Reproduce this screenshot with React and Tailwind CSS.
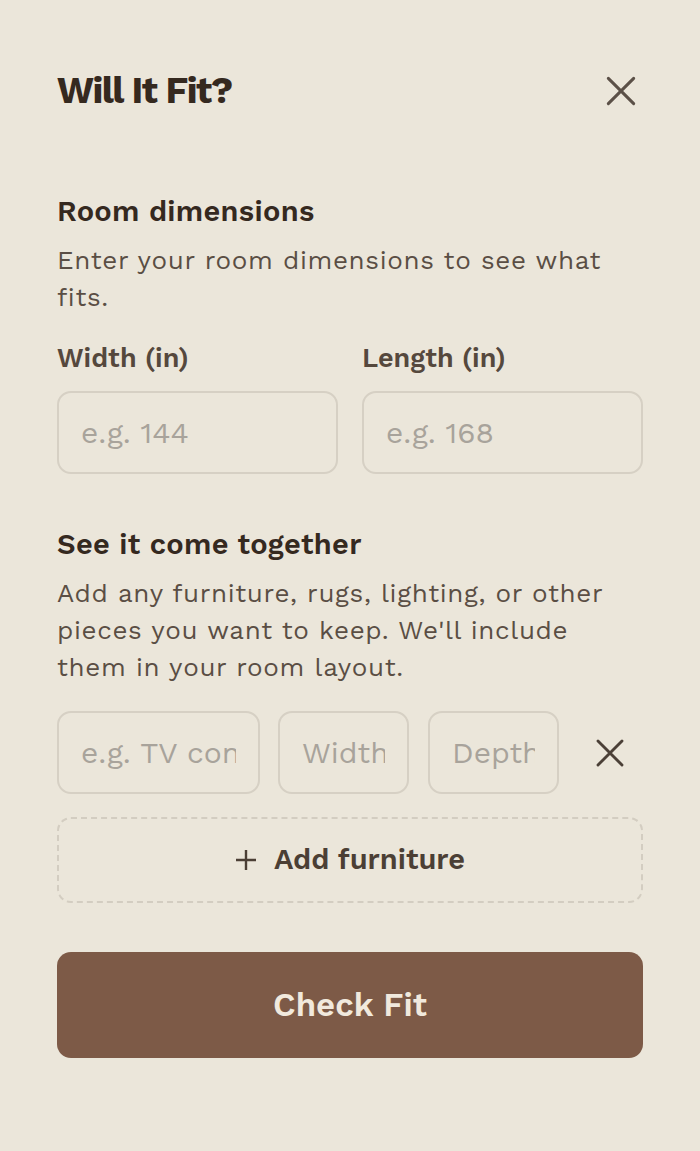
import React, { useState } from 'react';

// Close / remove cross
const Cross = ({ size = 30, stroke = 2, className = '' }) => (
  <svg width={size} height={size} viewBox="0 0 24 24" fill="none" className={className}>
    <path d="M4 4L20 20M20 4L4 20" stroke="currentColor" strokeWidth={stroke} strokeLinecap="round" />
  </svg>
);

const inputBase =
  'h-[83px] rounded-[14px] border-2 border-[#d6d0c4] bg-transparent px-[22px] text-[30px] text-[#3a2f26] placeholder:text-[#a8a39b] outline-none min-w-0';

export default function App() {
  const [items, setItems] = useState([{ id: 1 }]);

  return (
    <div
      className="min-h-screen bg-[#ebe6da] px-[57px] pt-[64px] pb-[95px] text-[#3a2f26]"
      style={{ fontFamily: '"Work Sans", Inter, "Noto Sans", sans-serif' }}
    >
      {/* Header */}
      <div className="flex items-center justify-between">
        <h1 className="text-[37px] font-bold tracking-[-0.04em] leading-[54px] text-[#35291f]">Will It Fit?</h1>
        <button className="text-[#5b5047] mr-[3px]" aria-label="Close">
          <Cross size={38} stroke={1.9} />
        </button>
      </div>

      {/* Room dimensions */}
      <section className="mt-[75px]">
        <h2 className="text-[29px] font-semibold leading-[36px] tracking-[0.01em] text-[#35291f]">Room dimensions</h2>
        <p className="mt-[13px] text-[26px] leading-[37px] tracking-[0.025em] text-[#5a4e44]">
          Enter your room dimensions to see what fits.
        </p>
        <div className="mt-[26px] grid grid-cols-2 gap-[24px]">
          <label className="flex flex-col">
            <span className="text-[27px] font-semibold leading-[32px] text-[#55483d]">Width (in)</span>
            <input className={`${inputBase} mt-[17px]`} placeholder="e.g. 144" />
          </label>
          <label className="flex flex-col">
            <span className="text-[27px] font-semibold leading-[32px] text-[#55483d]">Length (in)</span>
            <input className={`${inputBase} mt-[17px]`} placeholder="e.g. 168" />
          </label>
        </div>
      </section>

      {/* Furniture */}
      <section className="mt-[52px]">
        <h2 className="text-[29px] font-semibold leading-[36px] tracking-[0.01em] text-[#35291f]">See it come together</h2>
        <p className="mt-[13px] text-[26px] leading-[37px] tracking-[0.025em] text-[#5a4e44]">
          Add any furniture, rugs, lighting, or other pieces you want to keep. We'll include them in your room layout.
        </p>
        <div className="mt-[25px] flex flex-col gap-[23px]">
          {items.map((it) => (
            <div key={it.id} className="flex items-center">
              <input className={`${inputBase} w-[203px]`} placeholder="e.g. TV console" />
              <input className={`${inputBase} w-[131px] ml-[18px]`} placeholder="Width" />
              <input className={`${inputBase} w-[131px] ml-[19px]`} placeholder="Depth" />
              <button
                className="flex-1 flex justify-center pl-[18px] text-[#4b4037]"
                aria-label="Remove"
                onClick={() => setItems(items.filter((x) => x.id !== it.id))}
              >
                <Cross size={36} stroke={1.9} />
              </button>
            </div>
          ))}
          <button
            onClick={() => setItems([...items, { id: Date.now() }])}
            className="h-[86px] w-full rounded-[14px] border-2 border-dashed border-[#d3cdc1] flex items-center justify-center gap-[17px] text-[29px] font-semibold text-[#4b3f35]"
          >
            <svg width="22" height="22" viewBox="0 0 22 22" fill="none">
              <path d="M11 1V21M1 11H21" stroke="currentColor" strokeWidth="2.4" />
            </svg>
            <span>Add furniture</span>
          </button>
        </div>
      </section>

      <button className="mt-[49px] h-[106px] w-full rounded-[14px] bg-[#7d5a47] text-[33px] font-semibold text-[#f1e9dd]">
        Check Fit
      </button>
    </div>
  );
}
